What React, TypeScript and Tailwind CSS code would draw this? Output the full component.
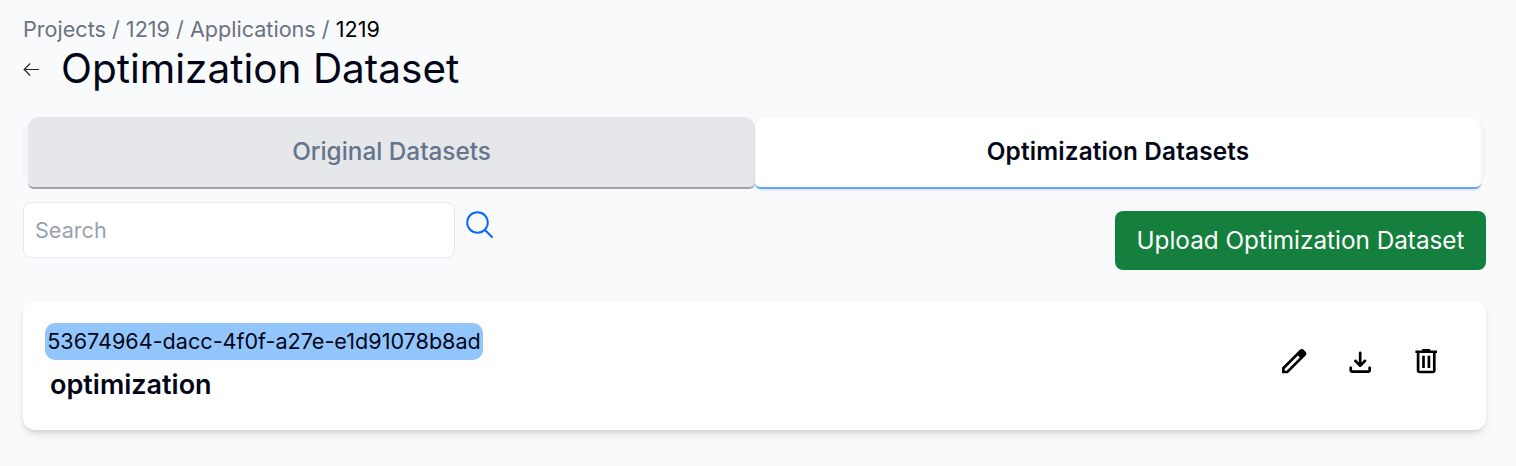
import React from "react";

function Header() {
  return (
    <header>
      <nav className="flex h-[27px] items-center whitespace-pre text-[21.6px] leading-[27px] text-gray-500">
        <span>Projects / 1219 / Applications / </span>
        <span className="text-black">1219</span>
      </nav>
      <div className="flex h-[52px] items-center">
        <svg className="mr-[21px] h-[17px] w-[17px]" viewBox="0 0 17 17" fill="none" stroke="#27272a" strokeWidth="1.2">
          <path d="M16 8.500H1.200M7.200 2.500L1.200 8.500L7.200 14.500" />
        </svg>
        <h1 className="text-[40.5px] leading-[48px] text-[#020617]">Optimization Dataset</h1>
      </div>
    </header>
  );
}

function Tabs() {
  return (
    <div className="mt-[22px] flex h-[78px]">
      <div className="mt-[9px] h-[53px] w-[5px] rounded-l-[5px] bg-[#f1f5f9]" />
      <button className="h-[72px] w-[727px] rounded-t-[11px] rounded-b-[6px] border-b-2 border-[#9ca3af] bg-[#e5e7eb] pb-px text-[24.3px] font-medium text-[#64748b]">
        Original Datasets
      </button>
      <button className="h-[72px] w-[726px] rounded-t-[11px] rounded-b-[6px] border-b-2 border-[#60a5fa] bg-white pb-px text-[24.3px] font-semibold tracking-[0.17px] text-[#020617] shadow-sm">
        Optimization Datasets
      </button>
      <div className="mt-[9px] h-[53px] w-[5px] rounded-r-[5px] bg-[#f1f5f9]" />
    </div>
  );
}

function Actions() {
  return (
    <div className="ml-auto mr-[44px] flex items-center gap-[33.3px] pb-2">
      <svg className="h-[32.4px] w-[32.4px]" viewBox="0 -960 960 960">
        <path d="M200-200h57l391-391-57-57-391 391v57Zm-80 80v-170l528-527q12-11 26.500-17t30.500-6q16 0 31 6t26 18l55 56q12 11 17.500 26t5.500 30q0 16-5.500 30.500T817-647L290-120H120Z" />
      </svg>
      <svg className="mt-px h-[32.4px] w-[32.4px]" viewBox="0 -960 960 960">
        <path d="M480-337q-8 0-15-2.500t-13-8.500L308-492q-12-12-11.500-28t11.500-28q12-12 28.500-12.500T365-549l75 75v-286q0-17 11.500-28.500T480-800q17 0 28.500 11.500T520-760v286l75-75q12-12 28.500-11.500T652-548q11 12 11.500 28T652-492L508-348q-6 6-13 8.500t-15 2.500ZM240-160q-33 0-56.500-23.500T160-240v-80q0-17 11.500-28.500T200-360q17 0 28.500 11.500T240-320v80h480v-80q0-17 11.500-28.500T760-360q17 0 28.500 11.500T800-320v80q0 33-23.500 56.500T720-160H240Z" />
      </svg>
      <svg className="h-[32.4px] w-[32.4px]" viewBox="0 -960 960 960">
        <path d="M280-120q-33 0-56.500-23.500T200-200v-520h-40v-80h200v-40h240v40h200v80h-40v520q0 33-23.500 56.500T680-120H280Zm400-600H280v520h400v-520ZM360-280h80v-360h-80v360Zm160 0h80v-360h-80v360Z" />
      </svg>
    </div>
  );
}

export default function App() {
  return (
    <main className="h-[466px] overflow-hidden bg-[#f9fafb] pl-[23px] pr-[30px] pt-4 font-['Inter',sans-serif]">
      <Header />
      <Tabs />
      <div className="mt-[7px] flex h-[68px] items-start">
        <input
          placeholder="Search"
          className="h-14 w-[432px] rounded-lg border border-[#e2e8f0] bg-white px-[11px] text-[21.6px] placeholder:text-gray-400"
        />
        <svg className="ml-[11px] mt-[9px] h-[27px] w-[27px]" viewBox="0 0 27 27" fill="none" stroke="#0866ff" strokeWidth="1.9" strokeLinecap="round">
          <circle cx="11.500" cy="11.500" r="10.300" />
          <path d="M19 19L26 26" />
        </svg>
        <button className="ml-auto mt-[9px] h-[59px] w-[371px] rounded-lg bg-[#15803d] text-[24.3px] text-white">
          Upload Optimization Dataset
        </button>
      </div>
      <section className="mt-[31px] flex h-[129px] rounded-xl bg-white shadow-[0_5px_8px_-1px_rgba(0,0,0,0.1),0_3px_5px_-2px_rgba(0,0,0,0.1)]">
        <div className="pl-[22px] pt-[22px]">
          <div className="flex h-[37px] w-[438px] items-center justify-center whitespace-nowrap rounded-[10px] bg-[#93c5fd] text-[21.6px] text-[#020617]">
            53674964-dacc-4f0f-a27e-e1d91078b8ad
          </div>
          <h2 className="mt-[7px] pl-[5px] text-[27px] font-semibold leading-9 text-[#020617]">optimization</h2>
        </div>
        <Actions />
      </section>
    </main>
  );
}
